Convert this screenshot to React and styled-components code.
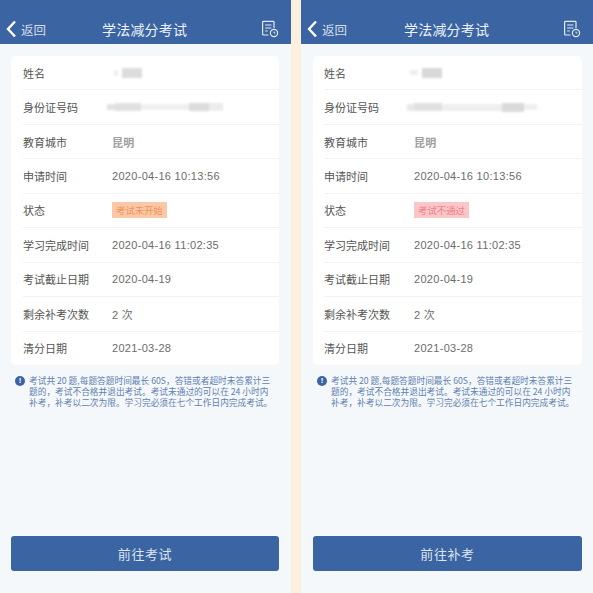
import React from 'react';
import styled, { createGlobalStyle } from 'styled-components';

const Global = createGlobalStyle`
  html, body { margin: 0; padding: 0; background: #fdefdf; }
  body { font-family: "Noto Sans CJK SC", "Liberation Sans", sans-serif; }
`

const Page = styled.div`
  display: flex;
  gap: 10px;
  width: 593px;
  height: 593px;
  overflow: hidden;
`

const Panel = styled.div`
  width: ${p => p.$width}px;
  flex: none;
  display: flex;
  flex-direction: column;
  background: #f4f8fa;
`

const Header = styled.div`
  height: 44px;
  flex: none;
  box-sizing: border-box;
  padding: 14px 12px 0 6px;
  background: #3a64a2;
  display: grid;
  grid-template-columns: ${p => p.$backWidth}px auto 1fr;
  align-items: center;
  color: #fff;
`

const Back = styled.div`
  display: flex;
  align-items: center;
  gap: 4px;
  font-size: 12.5px;
  color: #d5deeb;
`

const Title = styled.div`
  font-size: 14px;
  font-weight: 400;
  letter-spacing: 0.2px;
  color: #eef2f8;
`

const Tool = styled.div`
  justify-self: end;
  display: flex;
`

const Card = styled.div`
  margin: 12px ${p => p.$right}px 0 ${p => p.$left}px;
  height: 309px;
  background: #fff;
  border-radius: 5px;
  padding-left: ${p => p.$inset}px;
  display: flex;
  flex-direction: column;
`

const Row = styled.div`
  flex: 1 1 0;
  display: flex;
  align-items: center;
  font-size: 11px;
  color: #555;
  border-bottom: ${p => (p.$last ? 'none' : '1px solid #f1f2f3')};
`

const Label = styled.div`
  width: ${p => p.$width}px;
  flex: none;
`

const Value = styled.div`
  font-family: "Liberation Sans", "Noto Sans CJK SC", sans-serif;
  font-size: 11px;
  letter-spacing: 0.3px;
  color: ${p => (p.$muted ? '#a0a0a0' : '#6c6c6c')};
  font-weight: ${p => (p.$muted ? 700 : 400)};
`

const Tag = styled.div`
  height: 16px;
  padding: 0 4px;
  display: flex;
  align-items: center;
  font-size: 9.4px;
  color: ${p => (p.$fail ? '#ee7f86' : '#f0935c')};
  background: ${p => (p.$fail ? '#fbc6c8' : '#fbc8a6')};
`

const Smudge = styled.div`
  display: flex;
  align-items: center;
  height: 10px;
  margin-left: ${p => p.$shift}px;
  filter: blur(1.2px);
`

const Blot = styled.div`
  height: ${p => p.$h}px;
  width: ${p => p.$w}px;
  background: ${p => p.$c};
`

const Notice = styled.div`
  margin: 10px ${p => p.$right}px 0 ${p => p.$left}px;
  display: flex;
  gap: 4px;
`

const NoticeIcon = styled.div`
  flex: none;
  width: 10px;
  height: 10px;
  margin-top: 1px;
  border-radius: 50%;
  background: #3a64a2;
  color: #fff;
  font: 700 8px/10px "Liberation Sans", sans-serif;
  text-align: center;
`

const NoticeText = styled.div`
  font-size: 8.7px;
  line-height: 11px;
  color: #5f80b2;
  white-space: nowrap;
`

const Spacer = styled.div`
  flex: 1;
`

const Action = styled.button`
  display: block;
  margin: 0 ${p => p.$right}px 22px ${p => p.$left}px;
  height: 35px;
  border: none;
  border-radius: 3px;
  background: #3a64a2;
  color: #dde5f0;
  font-family: inherit;
  font-size: 13px;
  letter-spacing: 0.6px;
`

const BackIcon = () => (
  <svg width="11" height="18" viewBox="0 0 11 18" fill="none">
    <path d="M9 1.5 2 9l7 7.5" stroke="#fff" strokeWidth="2.4" />
  </svg>
)

const RecordIcon = () => (
  <svg width="18" height="18" viewBox="0 0 18 18" fill="none" stroke="#e4eaf3" strokeWidth="1.2">
    <path d="M7.5 15H2.4c-.5 0-.8-.3-.8-.8V2.2c0-.5.3-.8.8-.8h9.8c.5 0 .8.3.8.8V8" />
    <path d="M4.2 5h6.2M4.2 8h6.2M4.2 11h2.5" />
    <circle cx="13" cy="13" r="3.6" fill="#3a64a2" />
    <path d="M13 11.5V13h1.5" strokeWidth="0.9" />
  </svg>
)

const Redacted = ({ parts, shift }) => (
  <Smudge $shift={shift}>
    {parts.map(([w, h, c], i) => <Blot key={i} $w={w} $h={h} $c={c} />)}
  </Smudge>
)

const screens = [
  {
    width: 291, left: 11, right: 12, inset: 12, labelWidth: 89, noticeLeft: 15, noticeRight: 4, backWidth: 96,
    tag: '考试未开始', action: '前往考试', fail: false,
    nameShift: 2,
    name: [[4, 6, '#eeeeee'], [4, 8, '#fff'], [20, 10, '#dcdcdc']],
    idShift: -5,
    idNo: [[8, 6, '#e2e2e2'], [26, 8, '#e0e0e0'], [48, 6, '#f0f0f0'], [20, 8, '#dcdcdc'], [14, 8, '#ececec']],
  },
  {
    width: 292, left: 12, right: 11, inset: 11, labelWidth: 90, noticeLeft: 16, noticeRight: 4, backWidth: 97,
    tag: '考试不通过', action: '前往补考', fail: true,
    nameShift: -4,
    name: [[8, 5, '#eeeeee'], [4, 8, '#fff'], [20, 10, '#d8d8d8']],
    idShift: -7,
    idNo: [[7, 7, '#e8e8e8'], [28, 8, '#e0e0e0'], [60, 7, '#efefef'], [22, 9, '#dadada'], [13, 6, '#efefef']],
  },
]

function Screen({ s }) {
  const rows = [
    ['姓名', <Redacted parts={s.name} shift={s.nameShift} />],
    ['身份证号码', <Redacted parts={s.idNo} shift={s.idShift} />],
    ['教育城市', <Value $muted>昆明</Value>],
    ['申请时间', <Value>2020-04-16 10:13:56</Value>],
    ['状态', <Tag $fail={s.fail}>{s.tag}</Tag>],
    ['学习完成时间', <Value>2020-04-16 11:02:35</Value>],
    ['考试截止日期', <Value>2020-04-19</Value>],
    ['剩余补考次数', <Value>2 次</Value>],
    ['清分日期', <Value>2021-03-28</Value>],
  ]
  return (
    <Panel $width={s.width}>
      <Header $backWidth={s.backWidth}>
        <Back><BackIcon />返回</Back>
        <Title>学法减分考试</Title>
        <Tool><RecordIcon /></Tool>
      </Header>
      <Card $left={s.left} $right={s.right} $inset={s.inset}>
        {rows.map(([label, value], i) => (
          <Row key={label} $last={i === rows.length - 1}>
            <Label $width={s.labelWidth}>{label}</Label>
            {value}
          </Row>
        ))}
      </Card>
      <Notice $left={s.noticeLeft} $right={s.noticeRight}>
        <NoticeIcon>!</NoticeIcon>
        <NoticeText>
          考试共 20 题,每题答题时间最长 60S，答错或者超时未答累计三<br />
          题的，考试不合格并退出考试。考试未通过的可以在 24 小时内<br />
          补考，补考以二次为限。学习完必须在七个工作日内完成考试。
        </NoticeText>
      </Notice>
      <Spacer />
      <Action $left={s.left} $right={s.right}>{s.action}</Action>
    </Panel>
  )
}

export default function App() {
  return (
    <Page>
      <Global />
      {screens.map(s => <Screen key={s.action} s={s} />)}
    </Page>
  )
}
